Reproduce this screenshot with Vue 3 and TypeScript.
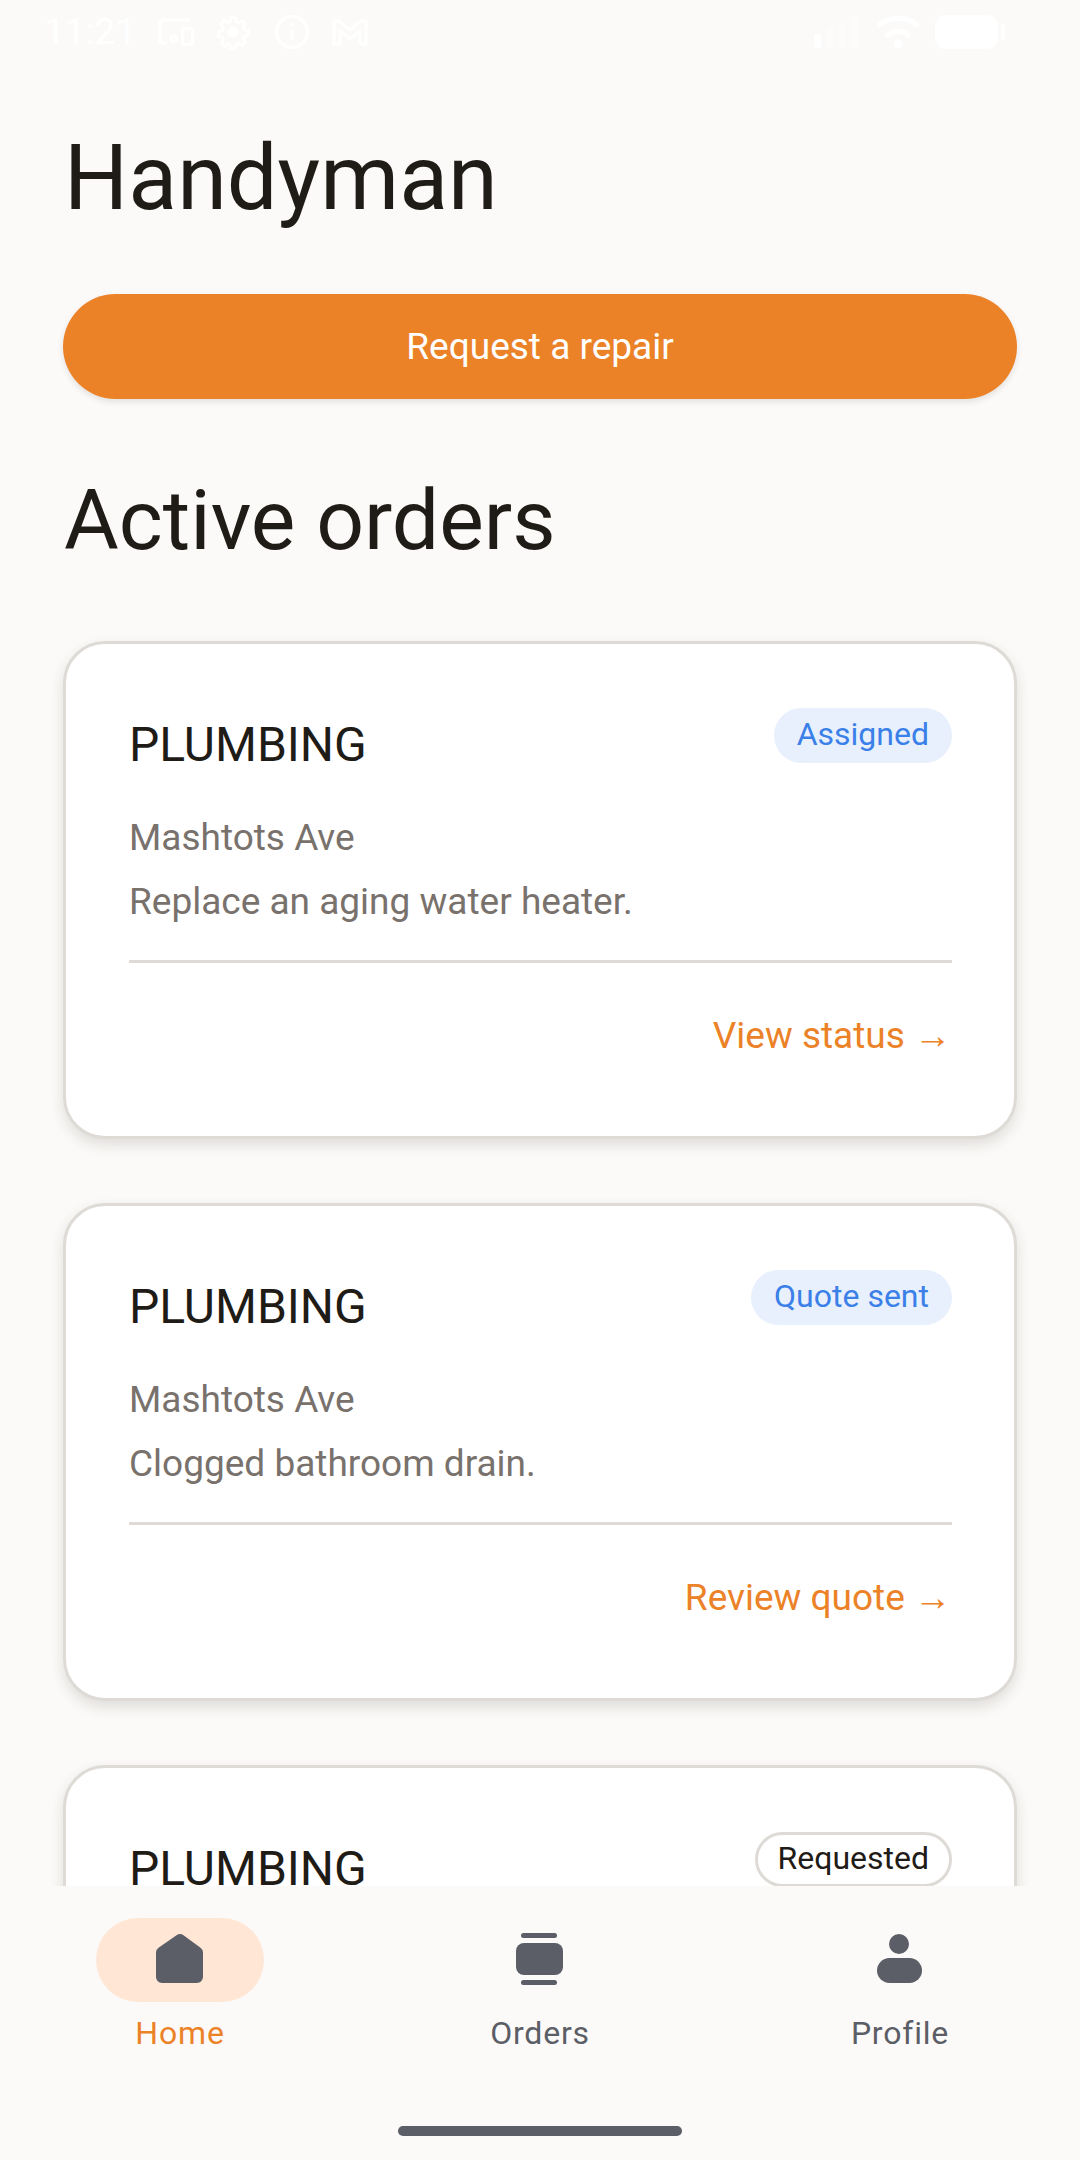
<template>
  <div class="screen">
    <div class="status-bar">
      <div class="status-left">
        <span class="clock">11:21</span>
        <svg class="s-devices" width="36" height="28" viewBox="0 0 36 28" fill="none" stroke="#fff" stroke-width="3">
          <path d="M32 2H5a3 3 0 0 0-3 3v20h7" />
          <circle cx="16" cy="21" r="3" />
          <rect x="24.5" y="10.5" width="10" height="16" rx="2" />
        </svg>
        <svg class="s-gear" width="34" height="36" viewBox="0 0 24 24" fill="none" stroke="#fff" stroke-width="2">
          <circle cx="12" cy="12" r="3" fill="#fff" />
          <path d="M10.3 2h3.4l.5 2.8 1.9.8 2.3-1.6 2.4 2.4-1.6 2.3.8 1.9 2.8.5v3.4l-2.8.5-.8 1.9 1.6 2.3-2.4 2.4-2.3-1.6-1.9.8-.5 2.8h-3.4l-.5-2.8-1.9-.8L6 22.300 3.600 19.900l1.600-2.300-.8-1.900-2.800-.5v-3.400l2.800-.5.8-1.900L3.600 6.100 6 3.700l2.300 1.600 1.900-.8z" stroke-linejoin="round" />
        </svg>
        <svg class="s-info" width="36" height="36" viewBox="0 0 36 36" fill="none" stroke="#fff" stroke-width="3.500">
          <circle cx="18" cy="18" r="15.500" />
          <path d="M18 16v10M18 9v3" />
        </svg>
        <svg class="s-mail" width="36" height="28" viewBox="0 0 36 28" fill="none" stroke="#fff" stroke-width="3" stroke-linejoin="round">
          <path d="M2 3h5l11 9 11-9h5v23h-6V13l-10 8-10-8v13H2z" />
        </svg>
      </div>
      <div class="status-right">
        <svg class="s-signal" width="46" height="32" viewBox="0 0 46 32" fill="#fff">
          <rect x="0" y="18" width="7" height="14" rx="2" />
          <rect x="12" y="12" width="7" height="20" rx="2" opacity=".45" />
          <rect x="25" y="5" width="7" height="27" rx="2" opacity=".45" />
          <rect x="38" y="0" width="7" height="32" rx="2" opacity=".45" />
        </svg>
        <svg class="s-wifi" width="44" height="33" viewBox="0 0 44 33" fill="none" stroke="#fff" stroke-width="5" stroke-linecap="round">
          <path d="M3 10c11-9 27-9 38 0" />
          <path d="M12 20c6-5 14-5 20 0" />
          <circle cx="22" cy="29" r="2" fill="#fff" />
        </svg>
        <div class="battery">
          <div class="battery-body"></div>
          <div class="battery-tip"></div>
        </div>
      </div>
    </div>

    <main class="content">
      <h1 class="page-title">Handyman</h1>
      <button class="primary-btn">Request a repair</button>
      <h2 class="section-title">Active orders</h2>

      <div class="order-list">
        <article v-for="order in orders" :key="order.status" class="order-card">
          <div class="order-head">
            <h3 class="order-type">{{ order.type }}</h3>
            <span class="chip" :class="`chip--${order.tone}`">{{ order.status }}</span>
          </div>
          <template v-if="order.note">
            <p class="order-line order-line--first">{{ order.street }}</p>
            <p class="order-line">{{ order.note }}</p>
            <div class="divider"></div>
            <div class="order-foot">
              <a class="order-link">{{ order.action }} →</a>
            </div>
          </template>
        </article>
      </div>
    </main>

    <nav class="bottom-nav">
      <div class="nav-tabs">
        <div class="nav-tab nav-tab--active">
          <div class="nav-pill">
            <svg width="72" height="72" viewBox="0 0 72 72" fill="#5b5e66">
              <path d="M32.500 11.300a6 6 0 0 1 7 0l17 12.400a6 6 0 0 1 2.500 4.800V53a6 6 0 0 1-6 6H18a6 6 0 0 1-6-6V28.500a6 6 0 0 1 2.500-4.800z" />
            </svg>
          </div>
          <span class="nav-label">Home</span>
        </div>
        <div class="nav-tab">
          <div class="nav-pill">
            <svg width="72" height="72" viewBox="0 0 72 72" fill="#5b5e66">
              <rect x="17" y="9" width="36" height="5" rx="2.500" />
              <rect x="12" y="19" width="47" height="32" rx="8" />
              <rect x="17" y="56" width="36" height="5" rx="2.500" />
            </svg>
          </div>
          <span class="nav-label">Orders</span>
        </div>
        <div class="nav-tab">
          <div class="nav-pill">
            <svg width="72" height="72" viewBox="0 0 72 72" fill="#5b5e66">
              <circle cx="35" cy="20" r="10" />
              <rect x="13" y="34" width="45" height="25" rx="12.500" />
            </svg>
          </div>
          <span class="nav-label">Profile</span>
        </div>
      </div>
      <div class="home-bar"></div>
    </nav>
  </div>
</template>

<script setup lang="ts">
interface Order {
  type: string
  status: string
  tone: 'blue' | 'plain'
  street?: string
  note?: string
  action?: string
}

// the third card runs under the nav, only its header is on screen
const orders: Order[] = [
  {
    type: 'PLUMBING',
    status: 'Assigned',
    tone: 'blue',
    street: 'Mashtots Ave',
    note: 'Replace an aging water heater.',
    action: 'View status',
  },
  {
    type: 'PLUMBING',
    status: 'Quote sent',
    tone: 'blue',
    street: 'Mashtots Ave',
    note: 'Clogged bathroom drain.',
    action: 'Review quote',
  },
  {
    type: 'PLUMBING',
    status: 'Requested',
    tone: 'plain',
  },
]
</script>

<style>
html,
body {
  margin: 0;
  background: #fbfaf8;
}
</style>

<style scoped>
.screen {
  width: 1080px;
  height: 2160px;
  display: flex;
  flex-direction: column;
  overflow: hidden;
  background: #fbfaf8;
  font-family: Roboto, sans-serif;
  color: #1f1b16;
}

/* Status bar */
.status-bar {
  flex: none;
  height: 63px;
  display: flex;
  justify-content: space-between;
  align-items: center;
  padding: 0 75px 0 44px;
}

.status-left,
.status-right {
  display: flex;
  align-items: center;
}

.clock {
  width: 114px;
  font-size: 37px;
  color: #fff;
  line-height: 63px;
}

.s-gear {
  margin-left: 22px;
}

.s-info {
  margin-left: 24px;
}

.s-mail {
  margin-left: 22px;
}

.s-wifi {
  margin-left: 16px;
}

.battery {
  margin-left: 15px;
  display: flex;
  align-items: center;
  gap: 3px;
}

.battery-body {
  width: 63px;
  height: 34px;
  border-radius: 11px;
  background: #fff;
}

.battery-tip {
  width: 4px;
  height: 16px;
  border-radius: 2px;
  background: #fff;
}

/* Page content */
.content {
  flex: 1;
  min-height: 0;
  overflow: hidden;
  padding: 0 63px;
}

.page-title {
  margin: 60px 0 0 1px;
  font-size: 90px;
  font-weight: 400;
  line-height: 112px;
}

.primary-btn {
  display: block;
  width: 100%;
  height: 105px;
  margin-top: 59px;
  border: 0;
  border-radius: 53px;
  background: #ec8228;
  color: #fff;
  font-family: inherit;
  font-size: 37px;
  box-shadow: 0 3px 6px rgba(0, 0, 0, 0.1);
}

.section-title {
  margin: 66px 0 0 1px;
  font-size: 84px;
  font-weight: 400;
  line-height: 112px;
}

.order-list {
  margin-top: 64px;
  display: flex;
  flex-direction: column;
  gap: 64px;
}

.order-card {
  flex: none;
  height: 498px;
  box-sizing: border-box;
  padding: 64px 62px 0 63px;
  background: #fff;
  border: 3px solid #dedbd7;
  border-radius: 42px;
  box-shadow: 0 6px 14px rgba(60, 50, 40, 0.14);
}

.order-head {
  display: flex;
  justify-content: space-between;
  align-items: flex-start;
  height: 74px;
}

.order-type {
  margin: 0;
  font-size: 48px;
  font-weight: 400;
  line-height: 74px;
}

.chip {
  box-sizing: border-box;
  height: 55px;
  padding: 0 23px;
  border-radius: 28px;
  font-size: 32px;
  line-height: 53px;
}

.chip--blue {
  background: #e7f0fc;
  color: #3b7fe8;
}

.chip--plain {
  border: 3px solid #dedbd7;
  padding: 0 20px;
  line-height: 47px;
  color: #1f1b16;
}

.order-line {
  margin: 0;
  font-size: 37px;
  line-height: 64px;
  color: #78716c;
}

.order-line--first {
  margin-top: 24px;
}

.divider {
  height: 3px;
  margin-top: 26px;
  background: #dedbd7;
}

.order-foot {
  display: flex;
  justify-content: flex-end;
  padding: 48px 1px 0 0;
}

.order-link {
  font-size: 37px;
  line-height: 50px;
  color: #ec8228;
}

/* Bottom navigation */
.bottom-nav {
  flex: none;
  height: 274px;
  background: #fbfaf8;
}

.nav-tabs {
  display: grid;
  grid-template-columns: repeat(3, 1fr);
  padding-top: 32px;
}

.nav-tab {
  display: flex;
  flex-direction: column;
  align-items: center;
}

.nav-pill {
  width: 168px;
  height: 84px;
  border-radius: 42px;
  display: flex;
  align-items: center;
  justify-content: center;
}

.nav-tab--active .nav-pill {
  background: #ffe6d5;
}

.nav-label {
  margin-top: 9px;
  font-size: 32px;
  line-height: 44px;
  letter-spacing: 0.8px;
  color: #5b5e66;
}

.nav-tab--active .nav-label {
  color: #ec8228;
}

.home-bar {
  width: 284px;
  height: 10px;
  margin: 71px auto 0;
  border-radius: 5px;
  background: #5b5e66;
}
</style>
